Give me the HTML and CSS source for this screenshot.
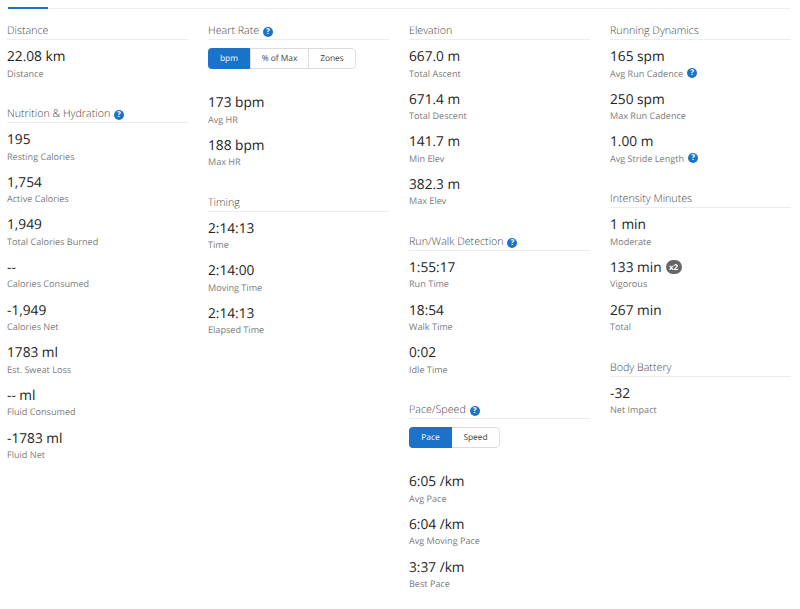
FILE: index.html
```html
<!DOCTYPE html>
<html lang="en">
<head>
<meta charset="utf-8">
<title>Activity stats</title>
<link rel="stylesheet" href="styles.css">
</head>
<body>
<div class="topbar"><div class="tab"></div></div>
<main class="grid">
  <div class="col">
    <section class="sec">
      <h3 class="title">Distance</h3>
      <div class="stat"><div class="val">22.08 km</div><div class="lab">Distance</div></div>
    </section>
    <section class="sec">
      <h3 class="title">Nutrition &amp; Hydration <span class="help">?</span></h3>
      <div class="stat"><div class="val">195</div><div class="lab">Resting Calories</div></div>
      <div class="stat"><div class="val">1,754</div><div class="lab">Active Calories</div></div>
      <div class="stat"><div class="val">1,949</div><div class="lab">Total Calories Burned</div></div>
      <div class="stat"><div class="val">--</div><div class="lab">Calories Consumed</div></div>
      <div class="stat"><div class="val">-1,949</div><div class="lab">Calories Net</div></div>
      <div class="stat"><div class="val">1783 ml</div><div class="lab">Est. Sweat Loss</div></div>
      <div class="stat"><div class="val">-- ml</div><div class="lab">Fluid Consumed</div></div>
      <div class="stat"><div class="val">-1783 ml</div><div class="lab">Fluid Net</div></div>
    </section>
  </div>
  <div class="col">
    <section class="sec">
      <h3 class="title">Heart Rate <span class="help">?</span></h3>
      <div class="seg seg-hr"><span class="btn on b-bpm">bpm</span><span class="btn b-pct">% of Max</span><span class="btn b-zones">Zones</span></div>
      <div class="stat"><div class="val">173 bpm</div><div class="lab">Avg HR</div></div>
      <div class="stat"><div class="val">188 bpm</div><div class="lab">Max HR</div></div>
    </section>
    <section class="sec">
      <h3 class="title">Timing</h3>
      <div class="stat"><div class="val">2:14:13</div><div class="lab">Time</div></div>
      <div class="stat"><div class="val">2:14:00</div><div class="lab">Moving Time</div></div>
      <div class="stat"><div class="val">2:14:13</div><div class="lab">Elapsed Time</div></div>
    </section>
  </div>
  <div class="col">
    <section class="sec">
      <h3 class="title">Elevation</h3>
      <div class="stat"><div class="val">667.0 m</div><div class="lab">Total Ascent</div></div>
      <div class="stat"><div class="val">671.4 m</div><div class="lab">Total Descent</div></div>
      <div class="stat"><div class="val">141.7 m</div><div class="lab">Min Elev</div></div>
      <div class="stat"><div class="val">382.3 m</div><div class="lab">Max Elev</div></div>
    </section>
    <section class="sec">
      <h3 class="title">Run/Walk Detection <span class="help">?</span></h3>
      <div class="stat"><div class="val">1:55:17</div><div class="lab">Run Time</div></div>
      <div class="stat"><div class="val">18:54</div><div class="lab">Walk Time</div></div>
      <div class="stat"><div class="val">0:02</div><div class="lab">Idle Time</div></div>
    </section>
    <section class="sec">
      <h3 class="title">Pace/Speed <span class="help">?</span></h3>
      <div class="seg seg-pace"><span class="btn on b-pace">Pace</span><span class="btn b-speed">Speed</span></div>
      <div class="stat"><div class="val">6:05 /km</div><div class="lab">Avg Pace</div></div>
      <div class="stat"><div class="val">6:04 /km</div><div class="lab">Avg Moving Pace</div></div>
      <div class="stat"><div class="val">3:37 /km</div><div class="lab">Best Pace</div></div>
    </section>
  </div>
  <div class="col">
    <section class="sec">
      <h3 class="title">Running Dynamics</h3>
      <div class="stat"><div class="val">165 spm</div><div class="lab">Avg Run Cadence <span class="help">?</span></div></div>
      <div class="stat"><div class="val">250 spm</div><div class="lab">Max Run Cadence</div></div>
      <div class="stat"><div class="val">1.00 m</div><div class="lab">Avg Stride Length <span class="help">?</span></div></div>
    </section>
    <section class="sec">
      <h3 class="title">Intensity Minutes</h3>
      <div class="stat"><div class="val">1 min</div><div class="lab">Moderate</div></div>
      <div class="stat"><div class="val">133 min <span class="x2">x2</span></div><div class="lab">Vigorous</div></div>
      <div class="stat"><div class="val">267 min</div><div class="lab">Total</div></div>
    </section>
    <section class="sec">
      <h3 class="title">Body Battery</h3>
      <div class="stat"><div class="val">-32</div><div class="lab">Net Impact</div></div>
    </section>
  </div>
</main>
</body>
</html>
```
FILE: styles.css
```css
* { box-sizing: border-box; }
html, body { margin: 0; padding: 0; }
body {
  width: 800px;
  height: 609px;
  overflow: hidden;
  background: #fff;
  font-family: "Open Sans", sans-serif;
  color: #222;
  text-rendering: geometricPrecision;
}
.topbar {
  margin: 0 10px 0 7px;
  height: 9px;
  border-bottom: 1px solid #eceef0;
}
.tab {
  width: 40px;
  height: 9px;
  border-bottom: 2px solid #1a73c9;
  margin-left: 1px;
}
.grid {
  display: grid;
  grid-template-columns: repeat(4, 181px);
  column-gap: 20px;
  padding: 14px 0 0 7px;
}
.title {
  margin: 0 0 6px;
  padding-top: 1px;
  font-size: 10.7px;
  font-weight: 300;
  line-height: 15px;
  color: #444;
  border-bottom: 1px solid #ececec;
  white-space: nowrap;
}
.sec { margin-bottom: 24px; }
.stat { height: 42.67px; }
.stat:last-child { height: 36px; }
.val {
  padding-top: 1px;
  font-size: 13.7px;
  line-height: 19px;
  color: #222;
  display: flex;
  align-items: center;
  gap: 4px;
}
.lab {
  font-size: 9.1px;
  line-height: 13px;
  margin-top: 0.5px;
  color: #7c7c7c;
  display: flex;
  align-items: center;
  gap: 3px;
}
.help {
  display: inline-flex;
  align-items: center;
  justify-content: center;
  width: 10px;
  height: 10px;
  border-radius: 50%;
  background: #1a73c9;
  color: #fff;
  font-size: 8px;
  font-weight: 700;
  line-height: 10px;
  margin-left: 1px;
}
.x2 {
  display: inline-flex;
  align-items: center;
  justify-content: center;
  width: 16px;
  height: 14px;
  border-radius: 7px;
  background: #666;
  color: #fff;
  font-size: 8px;
  font-weight: 700;
}
.seg {
  display: flex;
  height: 21px;
  margin-top: 8px;
  margin-bottom: 23px;
  border: 1px solid #ddd;
  border-radius: 4px;
  width: max-content;
}
.btn {
  display: flex;
  align-items: center;
  justify-content: center;
  font-size: 8.4px;
  font-weight: 500;
  color: #444;
}
.btn + .btn { border-left: 1px solid #ddd; }
.btn.on { background: #1a73c9; color: #fff; margin: -1px 0 -1px -1px; border-radius: 4px 0 0 4px; }
.b-bpm { width: 42px; }
.b-pct { width: 58px; }
.b-zones { width: 47px; }
.b-pace { width: 43px; }
.b-speed { width: 47px; border-left: 0 !important; }
```
